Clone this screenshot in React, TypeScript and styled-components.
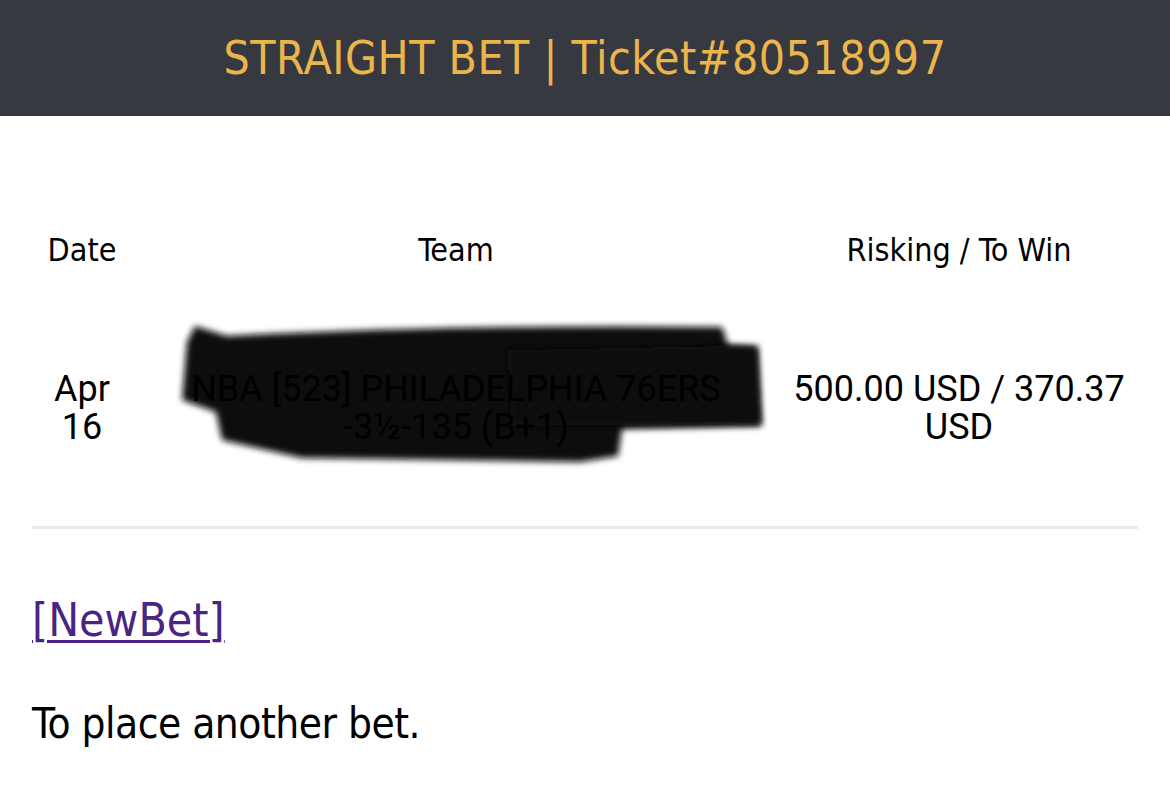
import styled, { createGlobalStyle } from 'styled-components';

const GlobalStyle = createGlobalStyle`
  html, body { margin: 0; padding: 0; background: #fff; }
  body {
    font-family: "DejaVu Sans Condensed", "DejaVu Sans", sans-serif;
    font-stretch: condensed;
    color: #000;
  }
`;

const TopBar = styled.header`
  height: 116px;
  background: #363940;
  display: flex;
  align-items: center;
  justify-content: center;
`;

const Title = styled.h1`
  margin: 0;
  font-weight: 400;
  font-size: 46px;
  letter-spacing: 0.5px;
  color: #ebb54b;
`;

const Content = styled.main`
  padding: 94px 32px 0;
`;

const Row = styled.div<{ $height: number }>`
  position: relative;
  display: grid;
  grid-template-columns: 100px 648px 1fr;
  align-items: center;
  height: ${p => p.$height}px;
`;

const HeadCell = styled.div`
  text-align: center;
  font-size: 32px;
`;

const DataCell = styled.div`
  position: relative;
  z-index: 1;
  text-align: center;
  font-family: Roboto, "Liberation Sans", sans-serif;
  font-stretch: normal;
  font-size: 36px;
  line-height: 38px;
`;

const Redaction = styled.svg`
  position: absolute;
  left: 0;
  top: 0;
  width: 100%;
  height: 100%;
  z-index: 0;
`;

const Divider = styled.hr`
  margin: 0;
  border: none;
  height: 3px;
  background: #e9e9e9;
`;

const NewBetLink = styled.a`
  display: inline-block;
  margin-top: 64px;
  font-size: 46px;
  color: #4b2384;
  text-decoration: underline;
  text-decoration-thickness: 3px;
  text-underline-offset: 4px;
`;

const Note = styled.p`
  margin: 52px 0 0;
  font-size: 42px;
  letter-spacing: -0.5px;
`;

const App = () => {
  return (
    <>
      <GlobalStyle />
      <TopBar>
        <Title>STRAIGHT BET | Ticket#80518997</Title>
      </TopBar>
      <Content>
        <Row $height={80}>
          <HeadCell>Date</HeadCell>
          <HeadCell>Team</HeadCell>
          <HeadCell>Risking / To Win</HeadCell>
        </Row>
        <Row $height={236}>
          <Redaction viewBox="0 0 1106 236" preserveAspectRatio="none">
            <defs>
              <filter id="smear" x="-10%" y="-20%" width="120%" height="140%">
                <feGaussianBlur stdDeviation="3" />
              </filter>
            </defs>
            <path
              filter="url(#smear)"
              fill="#0e0e0e"
              d="M163 36 L195 46 Q420 34 690 37 L696 55 L726 56 L730 136 L590 139 L586 166 L548 172 L270 168 L190 150 L184 122 L150 110 L155 52 Z"
            />
            <path
              filter="url(#smear)"
              fill="#0a0a0a"
              d="M475 60 L690 56 L724 58 L728 134 L480 136 Z"
            />
          </Redaction>
          <DataCell>Apr<br />16</DataCell>
          <DataCell>NBA [523] PHILADELPHIA 76ERS<br />-3½-135 (B+1)</DataCell>
          <DataCell>500.00 USD / 370.37<br />USD</DataCell>
        </Row>
        <Divider />
        <NewBetLink href="#">[NewBet]</NewBetLink>
        <Note>To place another bet.</Note>
      </Content>
    </>
  );
};

export default App;
